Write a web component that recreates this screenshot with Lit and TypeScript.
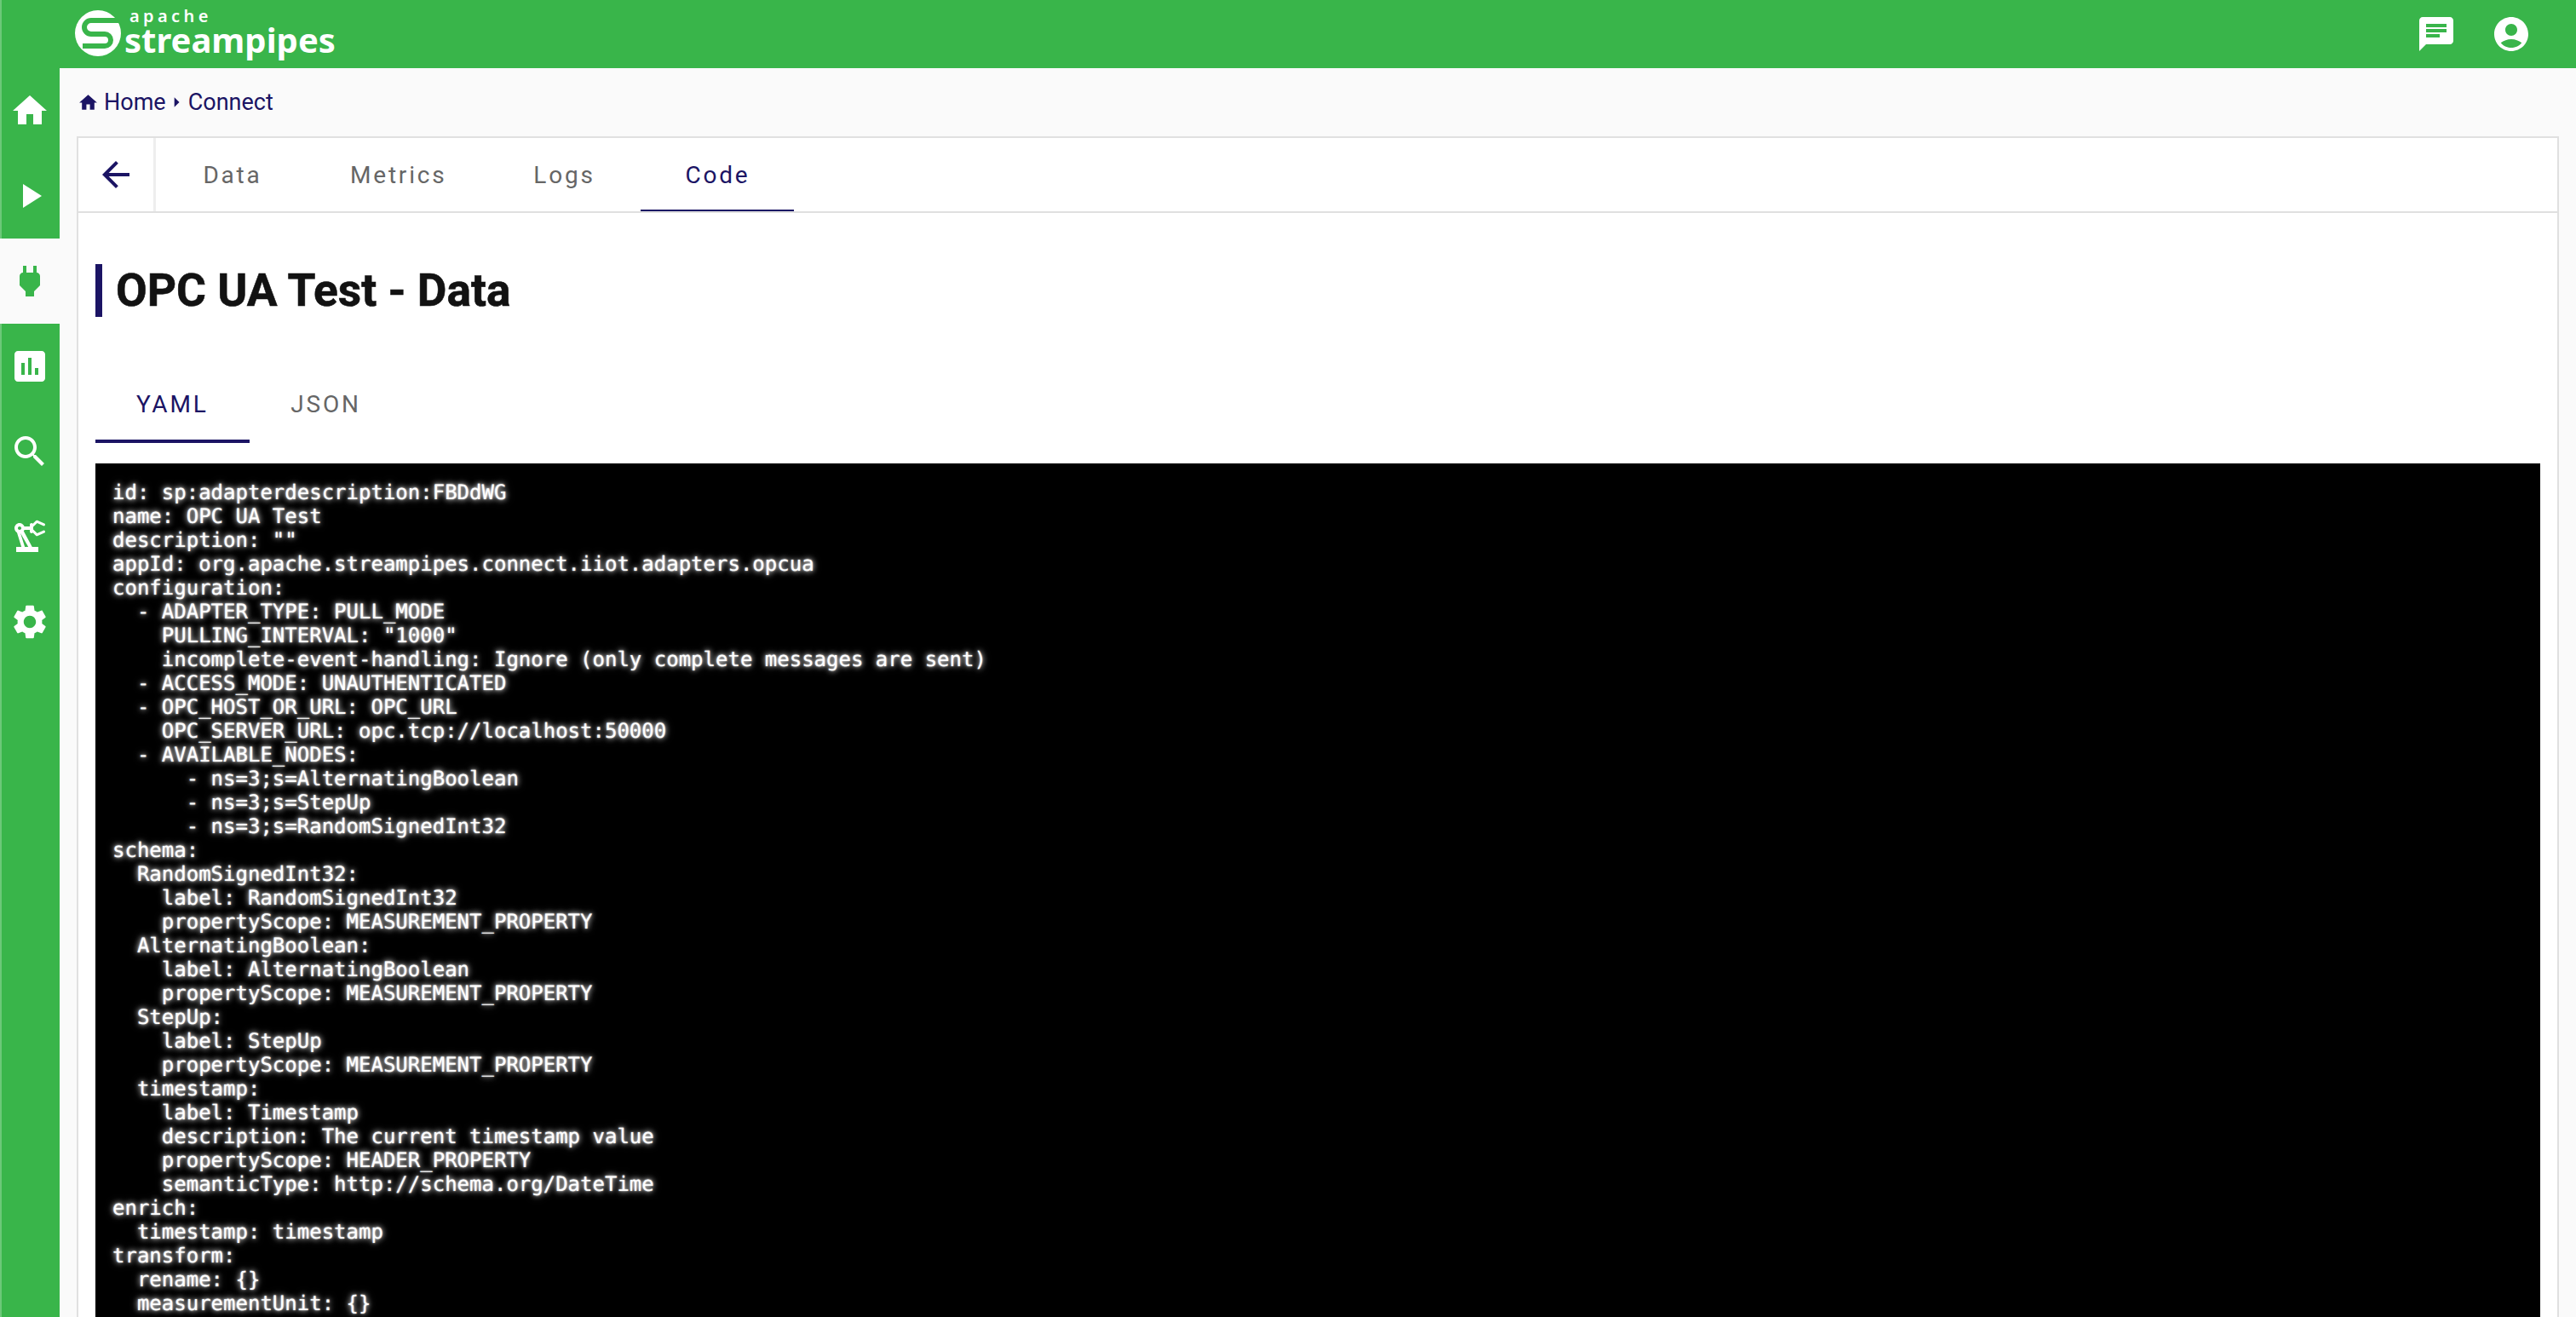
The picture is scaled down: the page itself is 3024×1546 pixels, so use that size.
import { LitElement, html, css, svg } from "lit";
import { customElement } from "lit/decorators.js";

const ICONS: Record<string, string> = {
  home: "M10 20v-6h4v6h5v-8h3L12 3 2 12h3v8z",
  play: "M8 5v14l11-7z",
  plug: "M16.01 7L16 3h-2v4h-4V3H8v4h-.01C7 6.99 6 7.99 6 8.99v5.49L9.5 18v3h5v-3l3.5-3.51v-5.5c0-1-1-2-1.99-1.99z",
  chart: "M19 3H5c-1.1 0-2 .9-2 2v14c0 1.1.9 2 2 2h14c1.1 0 2-.9 2-2V5c0-1.1-.9-2-2-2zM9 17H7v-7h2v7zm4 0h-2V7h2v10zm4 0h-2v-4h2v4z",
  search: "M15.5 14h-.79l-.28-.27C15.41 12.59 16 11.11 16 9.5 16 5.91 13.09 3 9.5 3S3 5.91 3 9.5 5.91 16 9.5 16c1.61 0 3.09-.59 4.23-1.57l.27.28v.79l5 4.99L20.49 19l-4.99-5zm-6 0C7.01 14 5 11.99 5 9.5S7.01 5 9.5 5 14 7.01 14 9.5 11.99 14 9.5 14z",
  robot: "M19.93 8.35l-3.6 1.68L14 7.7V6.3l2.33-2.33 3.6 1.68c.38.18.82.01 1-.36.18-.38.01-.82-.36-1l-3.92-1.83c-.38-.18-.83-.1-1.13.2L13.78 4.4c-.18-.24-.46-.4-.78-.4-.55 0-1 .45-1 1v1H8.82C8.4 4.84 7.3 4 6 4 4.34 4 3 5.34 3 7c0 1.1.6 2.05 1.48 2.58L7.08 18H4v3h13v-3h-3.62L8.41 8.77c.17-.24.31-.49.41-.77H12v1c0 .55.45 1 1 1 .32 0 .6-.16.78-.4l1.74 1.74c.3.3.75.38 1.13.2l3.92-1.83c.38-.18.54-.62.36-1-.18-.37-.62-.54-1-.36zM6 8c-.55 0-1-.45-1-1s.45-1 1-1 1 .45 1 1-.45 1-1 1zm5.11 10H9.08l-2.55-8.03c.01 0 .02-.01.03-.01L11.11 18z",
  gear: "M19.14 12.94c.04-.3.06-.61.06-.94 0-.32-.02-.64-.07-.94l2.03-1.58c.18-.14.23-.41.12-.61l-1.92-3.32c-.12-.22-.37-.29-.59-.22l-2.39.96c-.5-.38-1.03-.7-1.62-.94l-.36-2.54c-.04-.24-.24-.41-.48-.41h-3.84c-.24 0-.43.17-.47.41l-.36 2.54c-.59.24-1.13.57-1.62.94l-2.39-.96c-.22-.08-.47 0-.59.22L2.74 8.87c-.12.21-.08.47.12.61l2.03 1.58c-.05.3-.09.63-.09.94s.02.64.07.94l-2.03 1.58c-.18.14-.23.41-.12.61l1.92 3.32c.12.22.37.29.59.22l2.39-.96c.5.38 1.03.7 1.62.94l.36 2.54c.05.24.24.41.48.41h3.84c.24 0 .44-.17.47-.41l.36-2.54c.59-.24 1.13-.56 1.62-.94l2.39.96c.22.08.47 0 .59-.22l1.92-3.32c.12-.22.07-.47-.12-.61l-2.01-1.58zM12 15.6c-1.98 0-3.6-1.62-3.6-3.6s1.62-3.6 3.6-3.6 3.6 1.62 3.6 3.6-1.62 3.6-3.6 3.6z",
  chat: "M20 2H4c-1.1 0-1.99.9-1.99 2L2 22l4-4h14c1.1 0 2-.9 2-2V4c0-1.1-.9-2-2-2zM6 9h12v2H6V9zm8 5H6v-2h8v2zm4-6H6V6h12v2z",
  account: "M12 2C6.48 2 2 6.48 2 12s4.48 10 10 10 10-4.48 10-10S17.52 2 12 2zm0 4c1.93 0 3.5 1.57 3.5 3.5S13.93 13 12 13s-3.5-1.57-3.5-3.5S10.07 6 12 6zm0 14c-2.03 0-4.43-.82-6.14-2.88C7.55 15.8 9.68 15 12 15s4.45.8 6.14 2.12C16.43 19.18 14.03 20 12 20z",
  back: "M20 11H7.83l5.59-5.59L12 4l-8 8 8 8 1.41-1.41L7.83 13H20v-2z",
  caret: "M10 17l5-5-5-5v10z",
};

const icon = (name: string, size: number) => html`<svg class="ic" width=${size} height=${size} viewBox="0 0 24 24" fill="currentColor">${svg`<path d=${ICONS[name]}></path>`}</svg>`;

const CODE = `id: sp:adapterdescription:FBDdWG
name: OPC UA Test
description: ""
appId: org.apache.streampipes.connect.iiot.adapters.opcua
configuration:
  - ADAPTER_TYPE: PULL_MODE
    PULLING_INTERVAL: "1000"
    incomplete-event-handling: Ignore (only complete messages are sent)
  - ACCESS_MODE: UNAUTHENTICATED
  - OPC_HOST_OR_URL: OPC_URL
    OPC_SERVER_URL: opc.tcp://localhost:50000
  - AVAILABLE_NODES:
      - ns=3;s=AlternatingBoolean
      - ns=3;s=StepUp
      - ns=3;s=RandomSignedInt32
schema:
  RandomSignedInt32:
    label: RandomSignedInt32
    propertyScope: MEASUREMENT_PROPERTY
  AlternatingBoolean:
    label: AlternatingBoolean
    propertyScope: MEASUREMENT_PROPERTY
  StepUp:
    label: StepUp
    propertyScope: MEASUREMENT_PROPERTY
  timestamp:
    label: Timestamp
    description: The current timestamp value
    propertyScope: HEADER_PROPERTY
    semanticType: http://schema.org/DateTime
enrich:
  timestamp: timestamp
transform:
  rename: {}
  measurementUnit: {}`;

@customElement("app-root")
export class AppRoot extends LitElement {
  static styles = css`
    :host { display: block; width: 3024px; height: 1546px; overflow: hidden; background: #fafafa; font-family: Roboto, sans-serif; }
    .ic { display: block; flex: none; }
    .top { height: 80px; background: #39b54a; border-left: 2px solid #6cc878; box-sizing: border-box; display: flex; align-items: center; justify-content: space-between; color: #fff; }
    .logo { display: flex; align-items: flex-start; margin-left: 85px; gap: 4px; padding-bottom: 2px; }
    .logo-text { display: flex; flex-direction: column; font-family: "Noto Sans", sans-serif; font-weight: 700; color: #fff; margin-top: -1px; }
    .apache { font-size: 20px; letter-spacing: 4.4px; margin-left: 5px; line-height: 18px; font-weight: 600; }
    .sp { font-size: 40px; line-height: 36px; margin-left: -1px; margin-top: 1px; }
    .top-actions { display: flex; gap: 40px; margin-right: 52px; }
    .body { display: flex; height: 1466px; }
    .side { width: 70px; flex: none; display: flex; flex-direction: column; background: #39b54a; border-left: 2px solid #6cc878; box-sizing: border-box; color: #fff; }
    .side-item { height: 100px; display: flex; align-items: center; justify-content: center; margin-left: -2px; flex: none; }
    .side-item.active { background: #fafafa; color: #39b54a; }
    .main { flex: 1; min-width: 0; padding: 0 20px; }
    .crumbs { height: 80px; display: flex; align-items: center; color: #1b1464; font-size: 27px; padding-left: 1px; }
    .crumbs .home { margin-right: 6px; }
    .crumbs .caret { margin-left: -2px; }
    .card { background: #fff; border: 2px solid #e0e0e0; border-bottom: none; height: 1386px; box-sizing: border-box; }
    .nav { height: 86px; display: flex; border-bottom: 2px solid #e0e0e0; box-sizing: content-box; }
    .back { width: 91px; flex: none; border-right: 3px solid #eeeeee; display: flex; align-items: center; justify-content: center; color: #1b1464; box-sizing: border-box; }
    .tab { min-width: 180px; padding: 0 48px; box-sizing: border-box; display: flex; align-items: center; justify-content: center; font-size: 28px; letter-spacing: 2.8px; color: #666; position: relative; }
    .tab.on { color: #1b1464; }
    .tab.on::after { content: ""; position: absolute; left: 0; right: 0; bottom: 0; height: 2px; background: #1b1464; }
    .content { padding: 60px 20px 0 20px; }
    .title { border-left: 8px solid #1b1464; height: 62px; display: flex; align-items: center; padding-left: 16px; font-size: 53.3px; font-weight: 700; color: #121212; margin: 0; -webkit-text-stroke: 0.6px #121212; }
    .subtabs { display: flex; margin-top: 52px; height: 96px; }
    .subtabs .tab { padding-top: 4px; }
    .subtabs .tab.on::after { height: 4px; }
    .code { margin: 24px 0 0 0; background: #000; color: #fff; font-family: "DejaVu Sans Mono", monospace; font-size: 24px; line-height: 28px; padding: 20px 20px; text-rendering: geometricPrecision; text-shadow: 0 0 2px rgba(255,255,255,0.9), 0 0 6px rgba(255,255,255,0.9), 0 0 10px rgba(255,255,255,0.5); white-space: pre; overflow: hidden; height: 1002px; box-sizing: border-box; }
  `;

  render() {
    return html`
      <div class="top">
        <div class="logo">
          <svg width="56" height="56" viewBox="0 0 56 56">
            <circle cx="28" cy="28" r="27" fill="#fff"></circle>
            <path d="M58 13 H20 a8 8 0 0 0 0 16 H36 a7 7 0 0 1 0 14 H10" fill="none" stroke="#39b54a" stroke-width="6"></path>
          </svg>
          <div class="logo-text"><span class="apache">apache</span><span class="sp">streampipes</span></div>
        </div>
        <div class="top-actions">${icon("chat", 48)}${icon("account", 48)}</div>
      </div>
      <div class="body">
        <nav class="side">
          ${["home", "play", "plug", "chart", "search", "robot", "gear"].map(
            (n) => html`<div class="side-item ${n === "plug" ? "active" : ""}">${icon(n, 48)}</div>`
          )}
        </nav>
        <main class="main">
          <div class="crumbs">
            <span class="home">${icon("home", 25)}</span><span>Home</span>
            <span class="caret">${icon("caret", 28)}</span><span>Connect</span>
          </div>
          <section class="card">
            <div class="nav">
              <div class="back">${icon("back", 48)}</div>
              ${["Data", "Metrics", "Logs", "Code"].map((t) => html`<div class="tab ${t === "Code" ? "on" : ""}">${t}</div>`)}
            </div>
            <div class="content">
              <h1 class="title">OPC UA Test - Data</h1>
              <div class="subtabs">
                ${["YAML", "JSON"].map((t) => html`<div class="tab ${t === "YAML" ? "on" : ""}">${t}</div>`)}
              </div>
              <pre class="code">${CODE}</pre>
            </div>
          </section>
        </main>
      </div>
    `;
  }
}
